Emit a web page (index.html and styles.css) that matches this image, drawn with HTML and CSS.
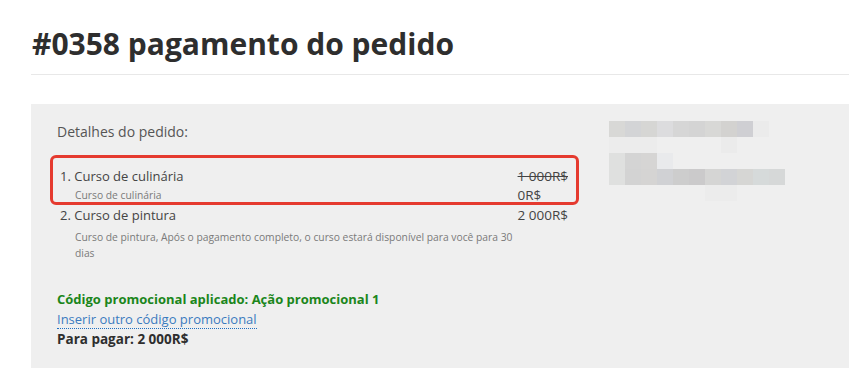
FILE: index.html
```html
<!DOCTYPE html>
<html lang="pt">
<head>
<meta charset="utf-8">
<title>#0358 pagamento do pedido</title>
<link rel="stylesheet" href="styles.css">
</head>
<body>
<div class="page">
  <header class="head">
    <h1 class="title">#0358 pagamento do pedido</h1>
  </header>
  <section class="panel">
    <div class="order">
      <div class="label">Detalhes do pedido:</div>
      <ol class="items">
        <li class="item">
          <div class="item-name">1. Curso de culinária</div>
          <div class="price">
            <div class="old">1 000R$</div>
            <div class="new">0R$</div>
          </div>
          <div class="item-desc">Curso de culinária</div>
        </li>
        <li class="item">
          <div class="item-name">2. Curso de pintura</div>
          <div class="price">
            <div class="cur">2 000R$</div>
          </div>
          <div class="item-desc long">Curso de pintura, Após o pagamento completo, o curso estará disponível para você para 30 dias</div>
        </li>
      </ol>
      <div class="promo">Código promocional aplicado: Ação promocional 1</div>
      <div><a class="promo-link" href="#">Inserir outro código promocional</a></div>
      <div class="total">Para pagar: 2 000R$</div>
      <div class="highlight"></div>
    </div>
    <div class="side">
      <svg class="blur" width="192" height="96" viewBox="0 0 192 96" aria-hidden="true">
        <rect x="0" y="0" width="16" height="16" fill="#d8d8d6"/>
        <rect x="16" y="0" width="16" height="16" fill="#d3d4d6"/>
        <rect x="32" y="0" width="16" height="16" fill="#d6d6d4"/>
        <rect x="48" y="0" width="16" height="16" fill="#dcdcde"/>
        <rect x="64" y="0" width="16" height="16" fill="#d6d6d6"/>
        <rect x="80" y="0" width="16" height="16" fill="#d4d4d4"/>
        <rect x="96" y="0" width="16" height="16" fill="#d8d8d6"/>
        <rect x="112" y="0" width="16" height="16" fill="#d3d2d0"/>
        <rect x="128" y="0" width="16" height="16" fill="#cfcfd3"/>
        <rect x="144" y="0" width="16" height="16" fill="#ebebeb"/>
        <rect x="0" y="16" width="48" height="16" fill="#ececec"/>
        <rect x="112" y="16" width="16" height="16" fill="#ebebeb"/>
        <rect x="0" y="32" width="16" height="16" fill="#dfe0df"/>
        <rect x="16" y="32" width="16" height="16" fill="#d4d4d4"/>
        <rect x="32" y="32" width="16" height="16" fill="#d6d5d4"/>
        <rect x="48" y="32" width="16" height="16" fill="#e9eaec"/>
        <rect x="0" y="48" width="16" height="16" fill="#dfe0df"/>
        <rect x="16" y="48" width="16" height="16" fill="#d3d3d3"/>
        <rect x="32" y="48" width="16" height="16" fill="#d5d4d3"/>
        <rect x="48" y="48" width="16" height="16" fill="#d0d1d4"/>
        <rect x="64" y="48" width="16" height="16" fill="#cdcdcd"/>
        <rect x="80" y="48" width="16" height="16" fill="#cbcacb"/>
        <rect x="96" y="48" width="16" height="16" fill="#d5d5d4"/>
        <rect x="112" y="48" width="16" height="16" fill="#d2d3d6"/>
        <rect x="128" y="48" width="16" height="16" fill="#d6d6d4"/>
        <rect x="144" y="48" width="16" height="16" fill="#d6dada"/>
        <rect x="160" y="48" width="16" height="16" fill="#d6d8d8"/>
        <rect x="96" y="64" width="32" height="16" fill="#ececec"/>
      </svg>
    </div>
  </section>
</div>
</body>
</html>
```

FILE: styles.css
```css
* { box-sizing: border-box; }

body {
  margin: 0;
  background: #ffffff;
  font-family: "Open Sans", "Liberation Sans", sans-serif;
  color: #444;
  overflow: hidden;
}

.page {
  padding-left: 31px;
  width: 849px;
}

.head {
  padding-top: 25px;
  padding-bottom: 11px;
  border-bottom: 1px solid #e8e8e8;
}

.title {
  margin: 0;
  padding-left: 1px;
  font-size: 30px;
  line-height: 38px;
  font-weight: 700;
  color: #2e2e2e;
}

.panel {
  margin-top: 29px;
  background: #efefef;
  height: 264px;
  display: flex;
  padding: 18px 0 20px 26px;
}

.order {
  position: relative;
  width: 511px;
  font-size: 14px;
}

.label {
  line-height: 20px;
  color: #555;
  margin-bottom: 24px;
}

.items {
  list-style: none;
  margin: 0;
  padding: 0 0 0 3px;
}

.item {
  display: grid;
  grid-template-columns: 1fr auto;
}

.item-name {
  grid-column: 1;
  grid-row: 1;
  font-size: 13px;
  line-height: 20px;
  color: #444;
}

.price {
  grid-column: 2;
  grid-row: 1 / span 2;
  font-size: 13.5px;
  line-height: 20px;
  color: #444;
}

.item-desc {
  grid-column: 1;
  grid-row: 2;
  padding-left: 15px;
  font-size: 10.3px;
  line-height: 18px;
  color: #7a7a7a;
}

.item-desc.long {
  grid-column: 1 / span 2;
  max-width: 470px;
  margin-top: 4px;
  line-height: 16px;
}

.old {
  text-decoration: line-through;
}

.new {
  line-height: 18px;
}

.cur {
  text-align: right;
}

.item + .item {
  margin-top: 1px;
}

.promo {
  margin-top: 28px;
  font-size: 13px;
  line-height: 20px;
  font-weight: 700;
  color: #1b861b;
}

.promo-link {
  display: inline-block;
  margin-top: 2px;
  font-size: 13px;
  line-height: 17px;
  color: #3b7bbf;
  text-decoration: none;
  border-bottom: 1px dotted #1f6fc2;
}

.total {
  font-size: 13.5px;
  line-height: 20px;
  font-weight: 700;
  color: #2e2e2e;
}

.highlight {
  position: absolute;
  left: -7px;
  top: 33px;
  width: 529px;
  height: 50px;
  border: 3px solid #e53a2f;
  border-radius: 6px;
}

.side {
  margin-left: 41px;
}

.blur {
  display: block;
  margin-top: -1px;
}
```
